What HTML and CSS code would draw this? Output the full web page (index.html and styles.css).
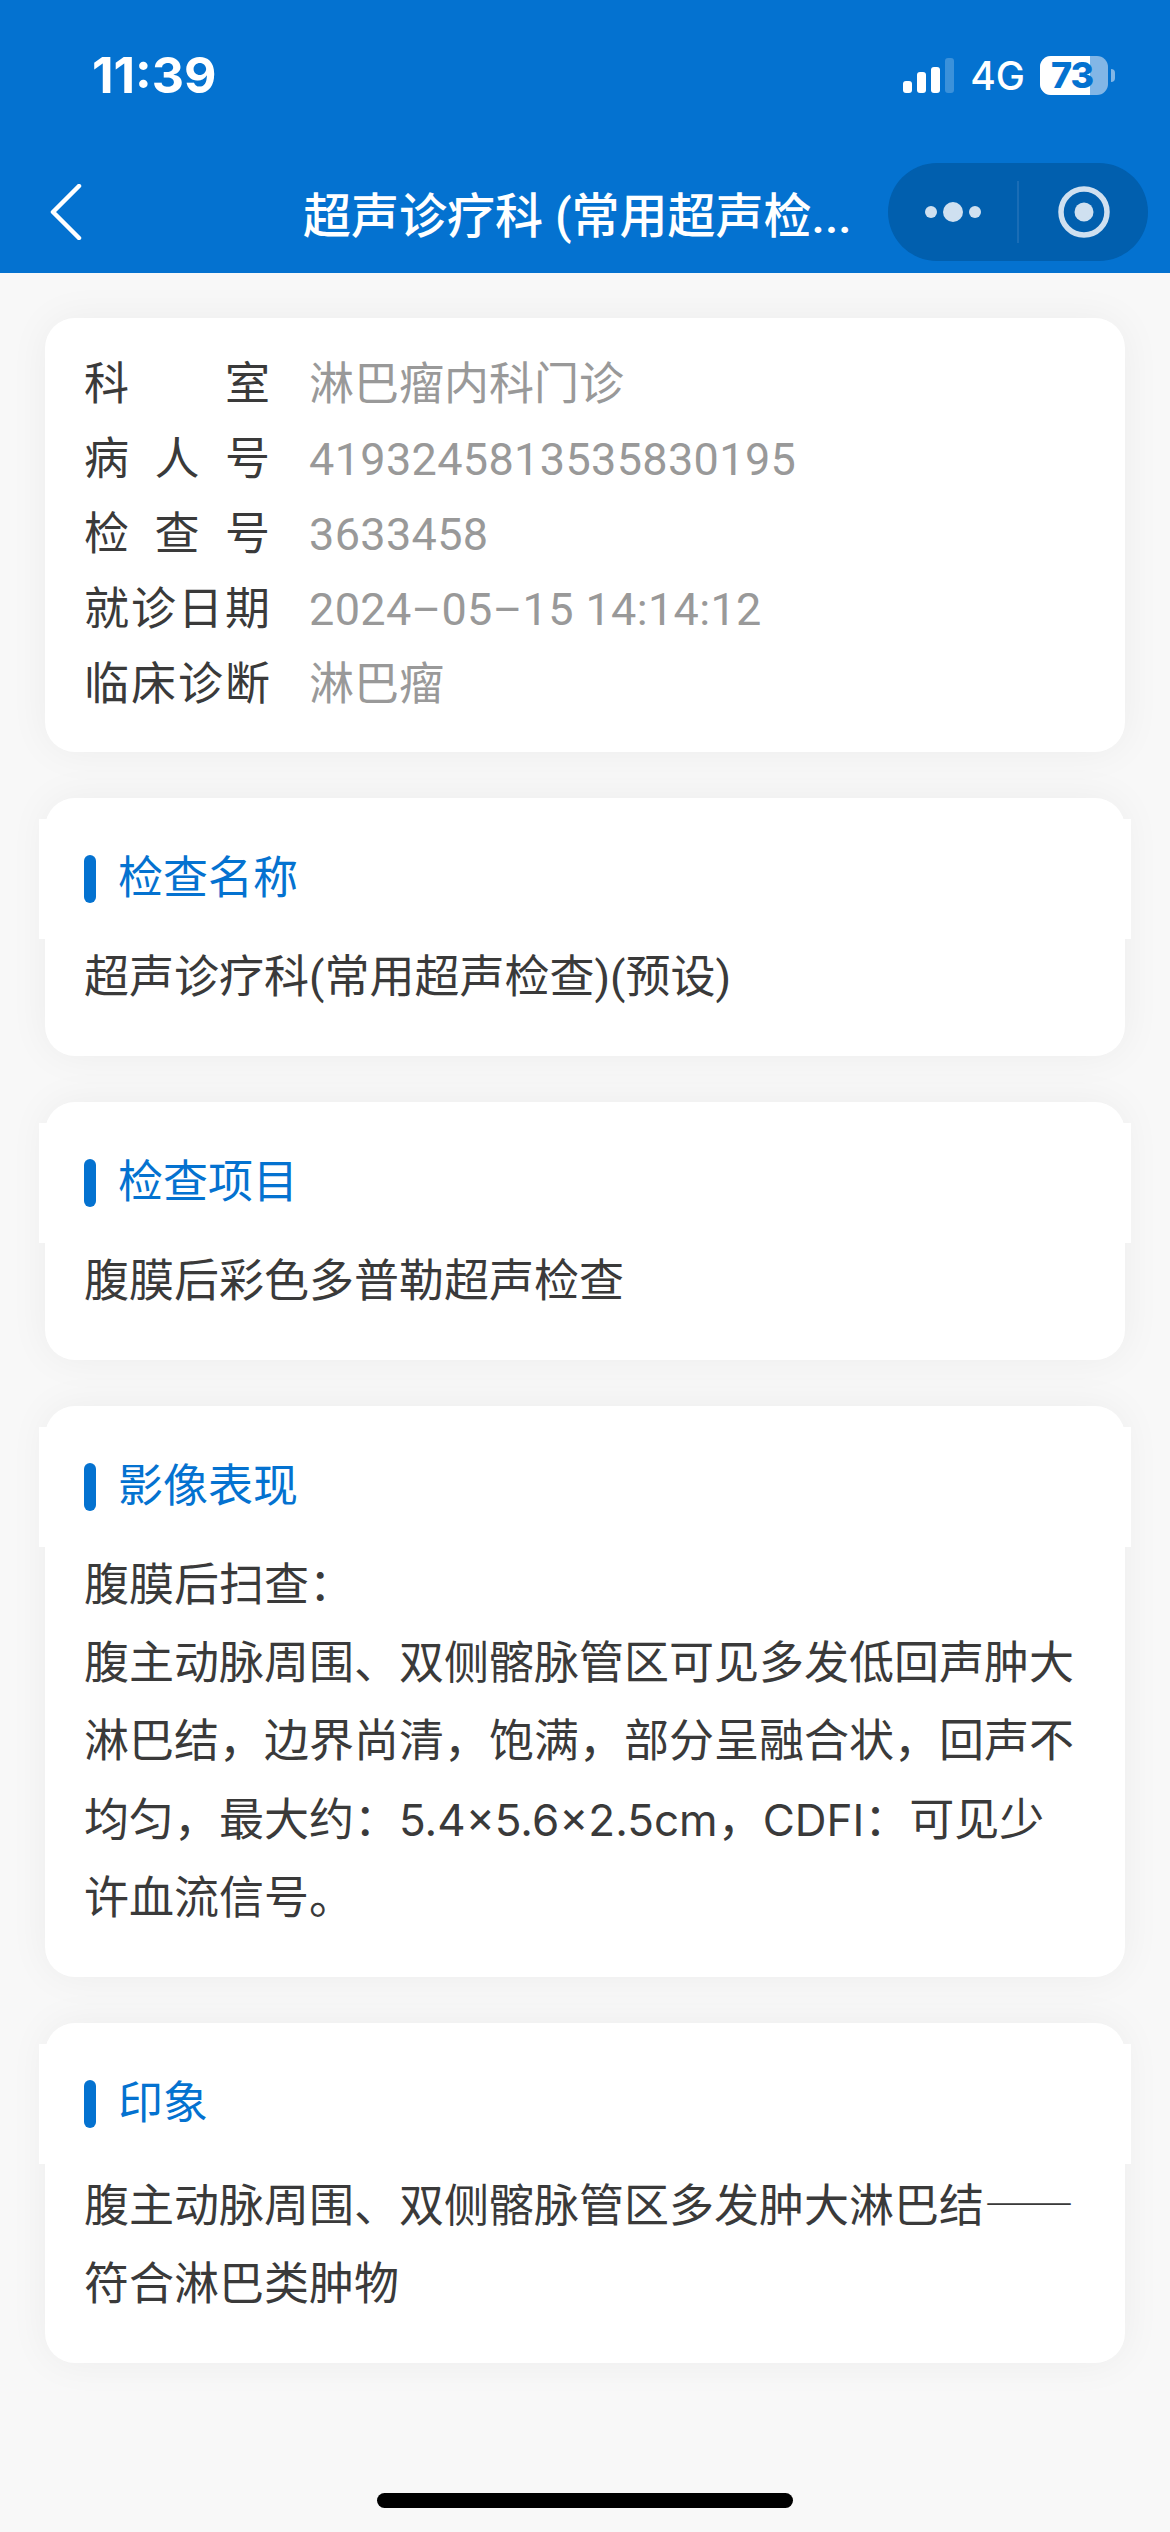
FILE: index.html
```html
<!DOCTYPE html>
<html lang="zh-CN">
<head>
    <meta charset="UTF-8">
    <meta name="viewport" content="width=device-width, initial-scale=1.0">
    <title>超声诊疗科</title>
    <link rel="stylesheet" href="styles.css">
</head>
<body>
    <div class="header">
        <div class="status">
            <span class="time">11:39</span>
            <div class="status-right">
                <svg class="signal" width="51" height="35" viewBox="0 0 51 35">
                    <rect x="0" y="23" width="9" height="12" rx="3" fill="#fff"/>
                    <rect x="14" y="14" width="9" height="21" rx="3" fill="#fff"/>
                    <rect x="28" y="9" width="9" height="26" rx="3" fill="#fff"/>
                    <rect x="42" y="0" width="9" height="35" rx="3" fill="#fff" fill-opacity="0.22"/>
                </svg>
                <span class="net">4G</span>
                <div class="battery">
                    <div class="battery-body">
                        <div class="battery-fill"></div>
                        <span class="battery-num">73</span>
                    </div>
                    <div class="battery-nub"></div>
                </div>
            </div>
        </div>
        <div class="nav">
            <svg class="back" width="32" height="56" viewBox="0 0 32 56">
                <path d="M29 2 L3 28 L29 54" fill="none" stroke="#fff" stroke-width="4.5" stroke-linecap="round" stroke-linejoin="round"/>
            </svg>
            <div class="nav-title">超声诊疗科 (常用超声检...</div>
            <div class="capsule">
                <div class="capsule-side">
                    <svg width="56" height="20" viewBox="0 0 56 20">
                        <circle cx="6" cy="10" r="6" fill="#cfe0f0"/>
                        <circle cx="28" cy="10" r="10" fill="#cfe0f0"/>
                        <circle cx="50" cy="10" r="6" fill="#cfe0f0"/>
                    </svg>
                </div>
                <div class="capsule-line"></div>
                <div class="capsule-side">
                    <svg width="52" height="52" viewBox="0 0 52 52">
                        <circle cx="26" cy="26" r="23" fill="none" stroke="#cfe0f0" stroke-width="5.5"/>
                        <circle cx="26" cy="26" r="9.5" fill="#cfe0f0"/>
                    </svg>
                </div>
            </div>
        </div>
    </div>

    <div class="content">
        <div class="card info">
            <div class="row"><span class="label">科室</span><span class="value">淋巴瘤内科门诊</span></div>
            <div class="row"><span class="label">病人号</span><span class="value digits">4193245813535830195</span></div>
            <div class="row"><span class="label">检查号</span><span class="value digits">3633458</span></div>
            <div class="row"><span class="label">就诊日期</span><span class="value digits">2024–05–15 14:14:12</span></div>
            <div class="row"><span class="label">临床诊断</span><span class="value">淋巴瘤</span></div>
        </div>

        <div class="card">
            <div class="card-title">检查名称</div>
            <div class="card-text">超声诊疗科(常用超声检查)(预设)</div>
        </div>

        <div class="card">
            <div class="card-title">检查项目</div>
            <div class="card-text">腹膜后彩色多普勒超声检查</div>
        </div>

        <div class="card">
            <div class="card-title">影像表现</div>
            <div class="card-text">腹膜后扫查：<br>腹主动脉周围、双侧髂脉管区可见多发低回声肿大淋巴结，边界尚清，饱满，部分呈融合状，回声不均匀，最大约：<span class="latin">5.4×5.6×2.5cm</span>，<span class="latin">CDFI</span>：可见少许血流信号。</div>
        </div>

        <div class="card">
            <div class="card-title">印象</div>
            <div class="card-text">腹主动脉周围、双侧髂脉管区多发肿大淋巴结<span class="dash">——</span>符合淋巴类肿物</div>
        </div>
    </div>

    <div class="home-bar"></div>
</body>
</html>
```

FILE: styles.css
```css
* {
    box-sizing: border-box;
}

body {
    position: relative;
    margin: 0;
    height: 2532px;
    overflow: hidden;
    background-color: #f8f8f8;
    font-family: Roboto, "Noto Sans CJK SC", sans-serif;
    font-size: 45px;
    color: #3a3a3a;
}

/* Header */
.header {
    height: 273px;
    background-color: #0472d0;
    color: #fff;
}

.status {
    display: flex;
    justify-content: space-between;
    align-items: center;
    height: 150px;
    padding: 0 55px 0 92px;
}

.time {
    font-family: Inter, sans-serif;
    font-size: 50px;
    font-weight: 700;
}

.status-right {
    display: flex;
    align-items: center;
}

.net {
    margin-left: 16px;
    font-family: Inter, sans-serif;
    font-size: 39px;
    font-weight: 500;
}

.battery {
    display: flex;
    align-items: center;
    margin-left: 15px;
}

.battery-body {
    position: relative;
    width: 68px;
    height: 39px;
    border-radius: 11px;
    overflow: hidden;
    background-color: #82b6e6;
}

.battery-fill {
    width: 50px;
    height: 100%;
    background-color: #fff;
}

.battery-num {
    position: absolute;
    left: 11px;
    top: 0;
    font-family: Inter, sans-serif;
    font-size: 36px;
    line-height: 39px;
    font-weight: 800;
    letter-spacing: -1px;
    color: #0472d0;
}

.battery-nub {
    width: 4px;
    height: 13px;
    margin-left: 3px;
    border-radius: 0 6px 6px 0;
    background-color: #82b6e6;
}

.nav {
    display: flex;
    align-items: center;
    height: 98px;
    margin-top: 13px;
    padding: 0 22px 0 50px;
}

.nav-title {
    flex: 1;
    padding-left: 221px;
    font-size: 48px;
    font-weight: 500;
    white-space: nowrap;
}

.capsule {
    display: flex;
    align-items: center;
    width: 260px;
    height: 98px;
    border-radius: 49px;
    background-color: #015fae;
}

.capsule-side {
    display: flex;
    flex: 1;
    justify-content: center;
    align-items: center;
}

.capsule-line {
    width: 2px;
    height: 62px;
    background-color: #1a6db6;
}

/* Cards */
.content {
    padding: 45px 45px 0;
}

.card {
    margin-bottom: 46px;
    padding: 21px 0 39px;
    border-radius: 30px;
    background-color: #fff;
    box-shadow: 0 0 40px rgba(0, 0, 0, 0.05);
}

.info {
    padding: 29px 39px 30px;
}

.row {
    display: flex;
    line-height: 75px;
}

.label {
    width: 186px;
    margin-right: 39px;
    text-align: justify;
    text-align-last: justify;
}

.value {
    color: #999;
}

.digits {
    letter-spacing: 0.35px;
}

.card-title {
    position: relative;
    height: 120px;
    margin: 0 -6px;
    padding-left: 79px;
    background-color: #fff;
    color: #0472d0;
    line-height: 120px;
}

.card-title::before {
    content: "";
    position: absolute;
    left: 45px;
    top: 36px;
    width: 12px;
    height: 48px;
    border-radius: 6px;
    background-color: #0472d0;
}

.card-text {
    padding: 0 39px;
    line-height: 78px;
}

.latin {
    font-family: Inter, sans-serif;
    font-size: 44px;
}

.dash {
    font-family: "Noto Sans CJK SC", sans-serif;
}

.home-bar {
    position: absolute;
    left: 377px;
    bottom: 24px;
    width: 416px;
    height: 15px;
    border-radius: 8px;
    background-color: #000;
}
```
